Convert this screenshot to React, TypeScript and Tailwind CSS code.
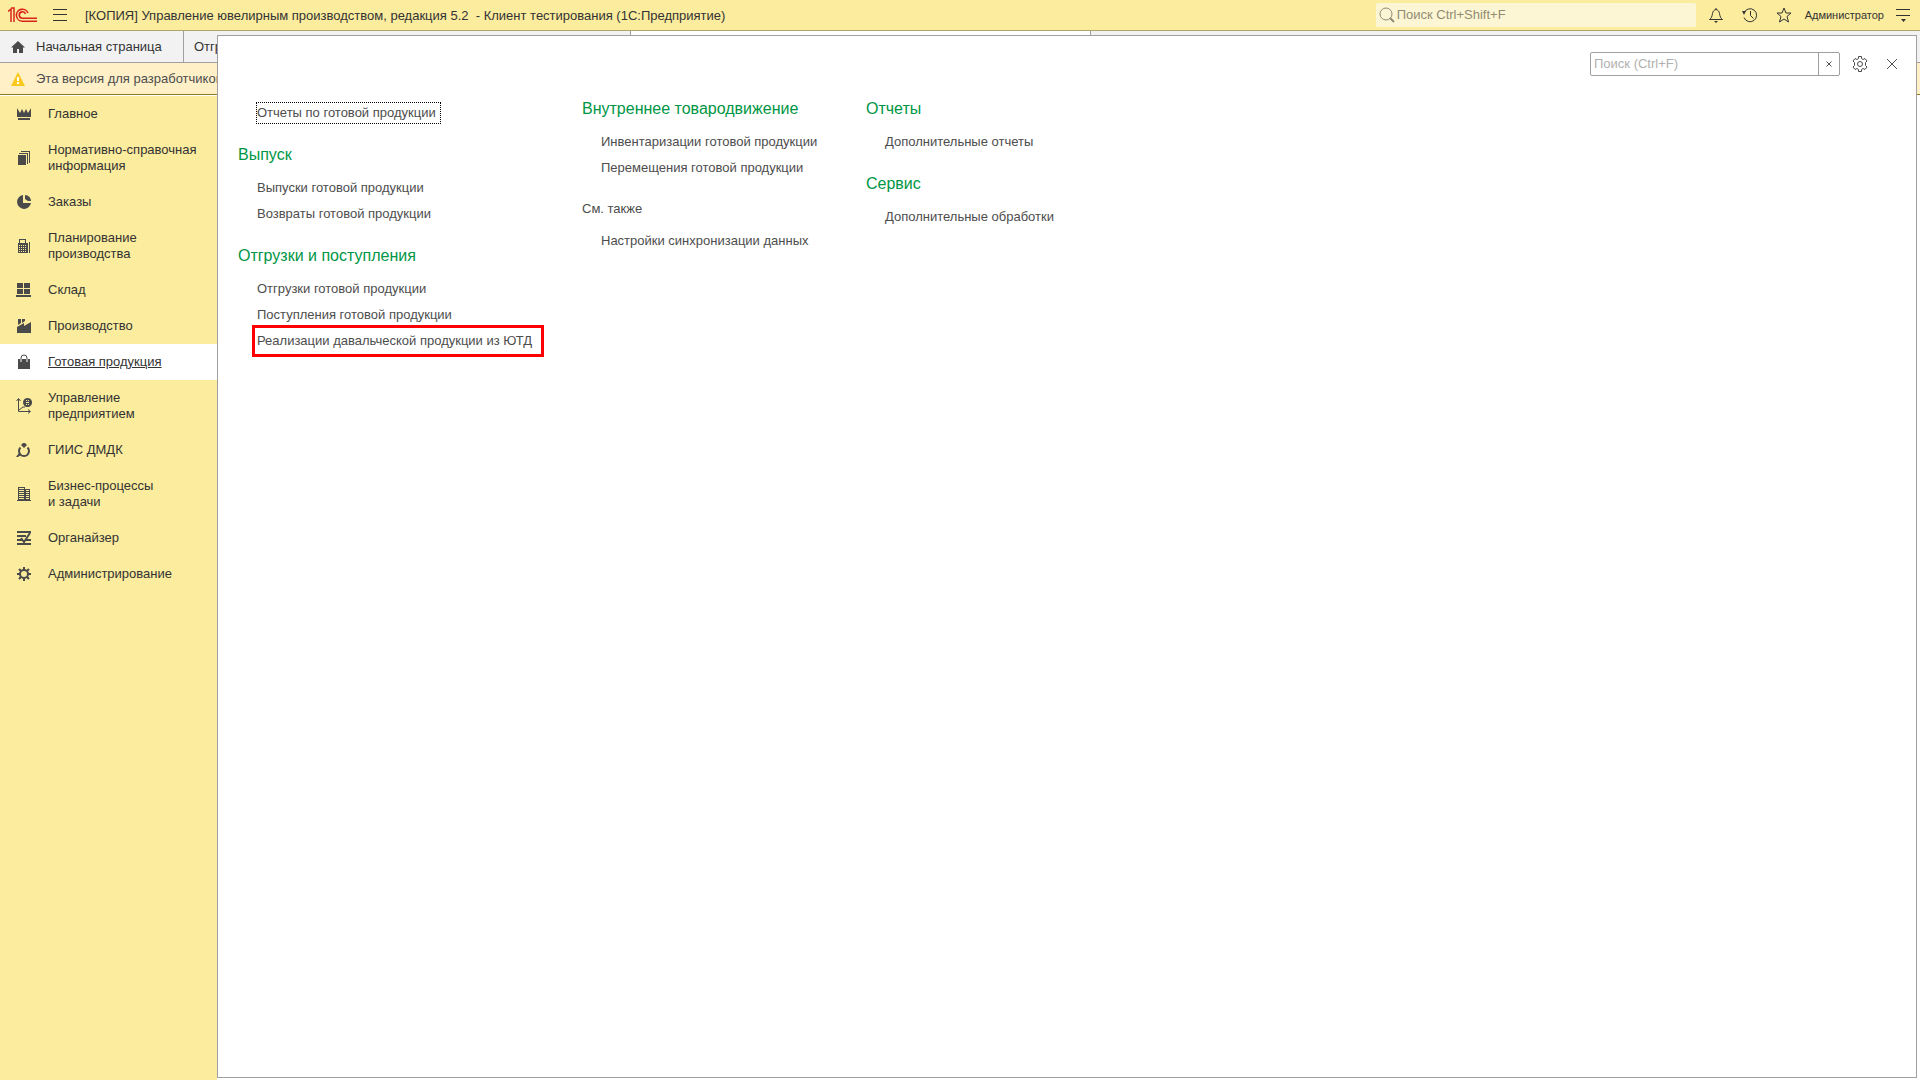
import React, { useState } from "react";

interface Section {
  title: string;
  lines: string[];
  icon: React.ReactNode;
}

interface LinkGroup {
  title?: string;
  plain?: boolean;
  links: string[];
}

const FOCUSED_LINK = "Отчеты по готовой продукции";
const MARKED_LINK = "Реализации давальческой продукции из ЮТД";

const sections: Section[] = [
  {
    title: "Главное",
    lines: ["Главное"],
    icon: (
      <>
        <path d="M1 2l3 5 2-4 2 4 2-4 2 4 3-5v9H1z" />
        <path d="M2 12h12v2H2z" />
      </>
    ),
  },
  {
    title: "Нормативно-справочная информация",
    lines: ["Нормативно-справочная", "информация"],
    icon: (
      <>
        <path d="M2 5h8v10H2z" />
        <path d="M3 3h9v11h-1V4H3zM5 1h9v12h-1V2H5z" />
      </>
    ),
  },
  {
    title: "Заказы",
    lines: ["Заказы"],
    icon: (
      <>
        <path d="M7 1a7 7 0 1 0 8 8H7z" />
        <path d="M9 1a6 6 0 0 1 6 6h-3L9 5z" />
      </>
    ),
  },
  {
    title: "Планирование производства",
    lines: ["Планирование", "производства"],
    icon: (
      <>
        <path
          fillRule="evenodd"
          d="M3 1h7v4h2v10H2V5h1zM4 2v3h5V2zM3 7v1h1V7zM5 7v1h1V7zM7 7v1h1V7zM9 7v1h1V7zM3 9v1h1V9zM5 9v1h1V9zM7 9v1h1V9zM9 9v1h1V9zM3 11v1h1v-1zM5 11v1h1v-1zM7 11v1h1v-1zM9 11v1h1v-1zM3 13v1h1v-1zM5 13v1h1v-1zM7 13v1h1v-1zM9 13v1h1v-1z"
        />
        <path d="M13 4h1v11h-1z" />
      </>
    ),
  },
  {
    title: "Склад",
    lines: ["Склад"],
    icon: <path d="M1 1h6v5H1zM8 1h6v5H8zM1 7h6v5H1zM8 7h6v5H8zM0 13h15v2H0z" />,
  },
  {
    title: "Производство",
    lines: ["Производство"],
    icon: <path d="M2 1h3v4l-3 2zM6 1h3v2L6 5zM1 9l7-4v3l7-4v11H1z" />,
  },
  {
    title: "Готовая продукция",
    lines: ["Готовая продукция"],
    icon: (
      <>
        <path d="M2 5h12v10H2z" />
        <path
          d="M5 5V4a3 3 0 0 1 6 0v1"
          fill="none"
          stroke="currentColor"
          strokeWidth="1"
        />
        <path d="M5 5v3M11 5v3" fill="none" stroke="#fff" strokeWidth="1" />
      </>
    ),
  },
  {
    title: "Управление предприятием",
    lines: ["Управление", "предприятием"],
    icon: (
      <>
        <path
          d="M2.5 1v12.500H14M.5 3l2-2.500 2 2.500M12 11.500l2.500 2-2.500 2M3 12l4-3h2"
          fill="none"
          stroke="currentColor"
        />
        <path
          fillRule="evenodd"
          d="M11.500 0a4.500 4.500 0 1 0 .1 0zM10 2h1v1h-1zM12 2h1v1h-1zM10 4h3v1h-3zM10 6h1v1h-1zM12 6h1v1h-1z"
        />
      </>
    ),
  },
  {
    title: "ГИИС ДМДК",
    lines: ["ГИИС ДМДК"],
    icon: (
      <>
        <path
          d="M4.500 5.500a5 5 0 1 0 7 0"
          fill="none"
          stroke="currentColor"
          strokeWidth="2"
        />
        <path d="M5 3l2-2h2l2 2-3 3z" />
        <path d="M0 15l3-4 2 2-3 2z" />
      </>
    ),
  },
  {
    title: "Бизнес-процессы и задачи",
    lines: ["Бизнес-процессы", "и задачи"],
    icon: (
      <>
        <path
          fillRule="evenodd"
          d="M2 1h7v13H2zM3 2v1h5V2zM3 4v1h5V4zM3 6v1h5V6zM3 8v1h5V8zM3 10v1h5v-1zM3 12v1h5v-1z"
        />
        <path
          fillRule="evenodd"
          d="M9 3h5v11H9zM10 4v1h3V4zM10 6v1h3V6zM10 8v1h3V8zM10 10v1h3v-1zM10 12v1h3v-1z"
        />
        <path d="M1 14h14v1H1z" />
      </>
    ),
  },
  {
    title: "Органайзер",
    lines: ["Органайзер"],
    icon: (
      <>
        <path d="M1 1h14v2H1zM1 5h9v2H1zM1 9h5v2H1zM10 9h5v2h-5zM1 13h14v2H1z" />
        <path
          d="M5 8l3 4 6-9"
          fill="none"
          stroke="currentColor"
          strokeWidth="2"
        />
      </>
    ),
  },
  {
    title: "Администрирование",
    lines: ["Администрирование"],
    icon: (
      <>
        <circle
          cx="8"
          cy="8"
          r="4"
          fill="none"
          stroke="currentColor"
          strokeWidth="2"
        />
        <path
          d="M8 1v3M8 12v3M1 8h3M12 8h3M3 3l2 2M11 11l2 2M13 3l-2 2M5 11l-2 2"
          fill="none"
          stroke="currentColor"
          strokeWidth="2"
        />
      </>
    ),
  },
];

const columns: LinkGroup[][] = [
  [
    { links: [FOCUSED_LINK] },
    {
      title: "Выпуск",
      links: ["Выпуски готовой продукции", "Возвраты готовой продукции"],
    },
    {
      title: "Отгрузки и поступления",
      links: [
        "Отгрузки готовой продукции",
        "Поступления готовой продукции",
        MARKED_LINK,
      ],
    },
  ],
  [
    {
      title: "Внутреннее товародвижение",
      links: [
        "Инвентаризации готовой продукции",
        "Перемещения готовой продукции",
      ],
    },
    { title: "См. также", plain: true, links: ["Настройки синхронизации данных"] },
  ],
  [
    { title: "Отчеты", links: ["Дополнительные отчеты"] },
    { title: "Сервис", links: ["Дополнительные обработки"] },
  ],
];

function Logo() {
  return (
    <svg
      width="30"
      height="16"
      viewBox="0 0 30 16"
      fill="none"
      stroke="#d9241c"
      strokeWidth="2"
      aria-label="1С"
    >
      <path d="M0 4.500L3 2v13M3 1h3v14" strokeWidth="1.500" />
      <path d="M20 6a6 6 0 1 0-5.500 8.200H29" strokeWidth="1.600" />
      <path d="M17.500 7a3.200 3.200 0 1 0-3 4.200H29" strokeWidth="1.600" />
    </svg>
  );
}

function TopBar() {
  return (
    <header className="flex h-[31px] items-center border-b border-[#aca768] bg-[#fbec9e] pr-[10px] pl-2">
      <Logo />
      <button type="button" aria-label="Меню" className="ml-[15px]">
        <svg width="14" height="12" viewBox="0 0 14 12" fill="#333">
          <path d="M0 0h14v1H0zM0 5h14v1H0zM0 11h14v1H0z" />
        </svg>
      </button>
      <h1 className="ml-[18px] whitespace-pre pt-px text-[13px] leading-4">
        {"[КОПИЯ] Управление ювелирным производством, редакция 5.2  - Клиент тестирования (1С:Предприятие)"}
      </h1>
      <label className="mr-3 ml-auto flex h-6 w-80 items-center rounded-xs bg-[#fdf6d5] pl-[3px]">
        <svg width="16" height="16" viewBox="0 0 16 16" fill="none" stroke="#8f8b75">
          <circle cx="7" cy="7" r="6" />
          <path d="M11 11l4 4" strokeWidth="2" />
        </svg>
        <input
          type="text"
          aria-label="Глобальный поиск"
          placeholder="Поиск Ctrl+Shift+F"
          className="ml-[2px] min-w-0 flex-1 bg-transparent text-[13px] leading-4 outline-none placeholder:text-[#918c72]"
        />
      </label>
      <div className="flex items-center gap-[18px]">
        <button type="button" aria-label="Уведомления">
          <svg width="16" height="16" viewBox="0 0 16 16" fill="none" stroke="#333">
            <path d="M1.500 12.500h13c-2-1.500-2.500-3-3-6C11 4 10 3 8 2.500 6 3 5 4 4.500 6.500c-.5 3-1 4.500-3 6zM8 1v2" />
            <path d="M6 14h4l-2 2z" fill="#333" stroke="none" />
          </svg>
        </button>
        <button type="button" aria-label="История">
          <svg width="16" height="16" viewBox="0 0 16 16" fill="none" stroke="#333">
            <path d="M2 6a6.500 6.500 0 1 1 0 4.500M8.500 4v4.500l3 3" />
            <path d="M0 4l4 0-2 4z" fill="#333" stroke="none" />
          </svg>
        </button>
        <button type="button" aria-label="Избранное">
          <svg width="16" height="16" viewBox="0 0 16 16" fill="none" stroke="#333">
            <path d="M8 1l2 5h5l-4 3.500 1.500 5.500L8 12l-4.500 3L5 9.500 1 6h5z" />
          </svg>
        </button>
      </div>
      <button type="button" className="ml-[13px] text-[11px] leading-4">
        Администратор
      </button>
      <button type="button" aria-label="Сервис и настройки" className="ml-3">
        <svg width="14" height="13" viewBox="0 0 14 13" fill="#333">
          <path d="M0 0h14v1H0zM0 6h14v1H0zM5 10h5l-2.500 3z" />
        </svg>
      </button>
    </header>
  );
}

function Tabs() {
  return (
    <nav className="flex h-8 border-b border-[#a0a0a0] bg-[#f2f2f2] text-[13px] leading-4">
      <button
        type="button"
        className="flex w-[184px] items-center gap-[11px] border-r border-[#a0a0a0] pl-[11px]"
      >
        <svg width="14" height="14" viewBox="0 0 14 14" fill="#4a4a4a">
          <path d="M7 1l7 6.500h-2V13H8V9H6v4H2V7.500H0z" />
        </svg>
        Начальная страница
      </button>
      <button
        type="button"
        className="w-[447px] border-r border-[#a0a0a0] pl-[10px] text-left"
      >
        Отгрузки готовой продукции
      </button>
      <button
        type="button"
        aria-label="Текущая вкладка"
        className="w-[460px] border-r border-[#a0a0a0] bg-white"
      />
    </nav>
  );
}

function Banner() {
  return (
    <div className="flex h-8 items-center gap-[11px] border-b border-[#8f7720] bg-[#fff0c8] pl-[11px] text-[13px] leading-4 text-[#4d4d4d]">
      <svg width="14" height="14" viewBox="0 0 14 14">
        <path d="M7 0l7 14H0z" fill="#fbc91e" />
        <path d="M6 5h2v4H6zM6 10h2v2H6z" fill="#fff" />
      </svg>
      Эта версия для разработчиков
    </div>
  );
}

function Sidebar({
  active,
  onSelect,
}: {
  active: string;
  onSelect: (title: string) => void;
}) {
  return (
    <nav className="mt-px w-[217px] shrink-0 bg-[#fbec9e]">
      {sections.map((section) => (
        <button
          key={section.title}
          type="button"
          onClick={() => onSelect(section.title)}
          className={`flex w-full items-center gap-4 py-[10px] pl-4 text-left text-[13px] leading-4 ${
            section.title === active ? "bg-white underline" : ""
          }`}
        >
          <svg
            width="16"
            height="16"
            viewBox="0 0 16 16"
            fill="currentColor"
            className="shrink-0 text-[#4a4a4a]"
          >
            {section.icon}
          </svg>
          <span>
            {section.lines.map((line) => (
              <span key={line} className="block">
                {line}
              </span>
            ))}
          </span>
        </button>
      ))}
    </nav>
  );
}

function PanelLink({ text }: { text: string }) {
  return (
    <li className="flex h-[26px] items-center">
      <a
        href="#"
        className={`relative whitespace-nowrap ${
          text === FOCUSED_LINK
            ? "-ml-px border border-dotted border-black py-[2px] pr-1"
            : ""
        }`}
      >
        {text}
        {text === MARKED_LINK && (
          <span className="absolute -inset-y-2 -right-3 -left-[5px] border-3 border-[#ff0000]" />
        )}
      </a>
    </li>
  );
}

function LinkColumn({ groups }: { groups: LinkGroup[] }) {
  return (
    <div className="flex flex-col gap-[9px]">
      {groups.map((group) => (
        <section key={group.title ?? group.links[0]}>
          {group.title && (
            <h2
              className={`flex items-center whitespace-nowrap ${
                group.plain ? "h-[38px]" : "h-10 text-base text-[#009646]"
              }`}
            >
              {group.title}
            </h2>
          )}
          <ul className={`pl-[19px] ${group.title ? "" : "pt-[11px]"}`}>
            {group.links.map((link) => (
              <PanelLink key={link} text={link} />
            ))}
          </ul>
        </section>
      ))}
    </div>
  );
}

function FunctionsPanel() {
  return (
    <main className="absolute top-[35px] right-[3px] bottom-[2px] left-[217px] border border-[#a0a0a0] bg-white text-[13px] leading-4 text-[#4d4d4d]">
      <div className="flex items-center justify-end pt-4 pr-[19px]">
        <div className="flex h-6 w-[250px] rounded-xs border border-[#a0a0a0]">
          <input
            type="text"
            aria-label="Поиск"
            placeholder="Поиск (Ctrl+F)"
            className="min-w-0 flex-1 px-[3px] outline-none placeholder:text-[#b0b0b0]"
          />
          <button
            type="button"
            aria-label="Очистить"
            className="flex w-[21px] items-center justify-center border-l border-[#a0a0a0]"
          >
            <svg width="6" height="6" viewBox="0 0 6 6" stroke="#4d4d4d">
              <path d="M.5.5l5 5M5.500.5l-5 5" />
            </svg>
          </button>
        </div>
        <button type="button" aria-label="Настройки" className="ml-3">
          <svg width="16" height="16" viewBox="0 0 16 16" fill="none" stroke="#4d4d4d">
            <path d="M6.500.5h3v2l1.500 1 2-1 2 2.500-1.500 1.500v3L15 11l-2 2.500-2-1-1.500 1v2h-3v-2l-1.500-1-2 1L1 11l1.500-1.500v-3L1 5l2-2.500 2 1 1.500-1z" />
            <circle cx="8" cy="8" r="2.500" />
          </svg>
        </button>
        <button type="button" aria-label="Закрыть" className="ml-[19px]">
          <svg width="10" height="10" viewBox="0 0 10 10" stroke="#4d4d4d">
            <path d="M0 0l10 10M10 0L0 10" />
          </svg>
        </button>
      </div>
      <div className="mt-[13px] flex pl-5">
        <div className="w-[344px]">
          <LinkColumn groups={columns[0]} />
        </div>
        <div className="w-[284px]">
          <LinkColumn groups={columns[1]} />
        </div>
        <LinkColumn groups={columns[2]} />
      </div>
    </main>
  );
}

export default function App() {
  const [active, setActive] = useState("Готовая продукция");

  return (
    <div className="relative flex h-screen flex-col overflow-hidden bg-white font-['Liberation_Sans',Arial,sans-serif] text-[#333]">
      <TopBar />
      <Tabs />
      <Banner />
      <div className="flex flex-1">
        <Sidebar active={active} onSelect={setActive} />
      </div>
      <FunctionsPanel />
    </div>
  );
}
